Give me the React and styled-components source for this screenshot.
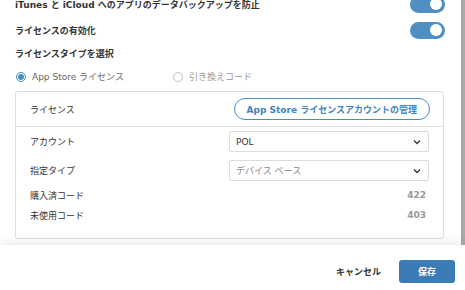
import React from "react";
import styled, { createGlobalStyle } from "styled-components";

const Global = createGlobalStyle`
  html, body { margin: 0; padding: 0; background: #fff; overflow: hidden; }
  body { font-family: "DejaVu Sans", "Noto Sans CJK JP", sans-serif; font-size: 9px; color: #333; }
  * { box-sizing: border-box; }
`;

const Frame = styled.div`
  width: 465px;
  height: 290px;
  display: flex;
  flex-direction: column;
  overflow: hidden;
`;

const ScrollArea = styled.div`
  height: 245px;
  display: flex;
  overflow: hidden;
`;

const Content = styled.div`
  flex: 1;
  margin-top: -9px;
  padding: 0 16px 0 15px;
  display: flex;
  flex-direction: column;
`;

const Scrollbar = styled.div`
  width: 4px;
  background: #a9a9a9;
`;

const ToggleRow = styled.div`
  height: 26px;
  flex: none;
  display: flex;
  align-items: center;
  justify-content: space-between;
`;

const Label = styled.span`
  font-weight: bold;
  color: #333;
  white-space: nowrap;
`;

const Toggle = styled.span`
  width: 35px;
  height: 17px;
  border-radius: 9px;
  background: #4f8fc4;
  display: flex;
  align-items: center;
  justify-content: flex-end;
  padding-right: 3px;
  &::after {
    content: "";
    width: 12px;
    height: 12px;
    border-radius: 50%;
    background: #fff;
  }
`;

const SectionTitle = styled.div`
  height: 21px;
  flex: none;
  display: flex;
  align-items: center;
  font-weight: bold;
`;

const RadioRow = styled.div`
  height: 25px;
  flex: none;
  display: flex;
  align-items: center;
  padding-left: 1px;
`;

const RadioItem = styled.label`
  display: flex;
  align-items: center;
  gap: 6px;
  width: ${(p) => p.$w}px;
  color: ${(p) => (p.$checked ? "#666" : "#999")};
`;

const RadioDot = styled.span`
  width: 10px;
  height: 10px;
  border-radius: 50%;
  border: 1px solid ${(p) => (p.$checked ? "#4a8ec2" : "#c4c4c4")};
  display: flex;
  align-items: center;
  justify-content: center;
  &::after {
    content: "";
    width: 6px;
    height: 6px;
    border-radius: 50%;
    background: ${(p) => (p.$checked ? "#4a8ec2" : "transparent")};
  }
`;

const Card = styled.div`
  margin-top: 2px;
  margin-right: 1px;
  flex: none;
  border: 1px solid #dedede;
  border-radius: 3px;
  display: flex;
  flex-direction: column;
`;

const CardHeader = styled.div`
  height: 35px;
  display: flex;
  align-items: center;
  justify-content: space-between;
  padding: 0 13px 0 14px;
  border-bottom: 1px solid #e3e3e3;
`;

const HeaderTitle = styled.span`
  color: #333;
`;

const PillButton = styled.button`
  height: 22px;
  padding: 0 12px;
  border: 1px solid #4a8ec2;
  border-radius: 11px;
  background: #fff;
  color: #3f84bf;
  font-family: inherit;
  font-size: 9px;
  font-weight: bold;
  white-space: nowrap;
`;

const CardBody = styled.div`
  padding: 0 14px 13px 14px;
  display: grid;
  grid-template-columns: 199px 1fr;
  grid-template-rows: 29px 29px auto;
  align-items: center;
`;

const CodeRows = styled.div`
  grid-column: 1 / -1;
  display: flex;
  flex-direction: column;
`;

const CodeRow = styled.div`
  height: 20px;
  display: flex;
  align-items: center;
  justify-content: space-between;
  padding-right: 3px;
`;

const FieldLabel = styled.span`
  color: #333;
`;

const CodeValue = styled.span`
  color: #999;
  font-weight: bold;
`;

const Select = styled.div`
  height: 21px;
  border: 1px solid #dcdcdc;
  border-radius: 2px;
  display: flex;
  align-items: center;
  justify-content: space-between;
  padding: 0 7px 0 6px;
  color: ${(p) => (p.$muted ? "#888" : "#333")};
`;

const Footer = styled.div`
  flex: 1;
  display: flex;
  align-items: center;
  justify-content: flex-end;
  gap: 16px;
  padding: 7px 10px 0 0;
  background: #fff;
  position: relative;
  box-shadow: 0 -5px 8px rgba(0, 0, 0, 0.06);
`;

const CancelButton = styled.button`
  border: none;
  background: none;
  padding: 0 2px;
  font-family: inherit;
  font-size: 9px;
  font-weight: bold;
  color: #333;
`;

const SaveButton = styled.button`
  width: 56px;
  height: 23px;
  border: none;
  border-radius: 3px;
  background: #3b7cb7;
  color: #fff;
  font-family: inherit;
  font-size: 9px;
  font-weight: bold;
`;

const Chevron = () => (
  <svg width="8" height="6" viewBox="0 0 8 6">
    <path d="M1 1.5 L4 4.5 L7 1.5" fill="none" stroke="#333" strokeWidth="1.3" />
  </svg>
);

export default function App() {
  return (
    <Frame>
      <Global />
      <ScrollArea>
        <Content>
          <ToggleRow>
            <Label>iTunes と iCloud へのアプリのデータバックアップを防止</Label>
            <Toggle />
          </ToggleRow>
          <ToggleRow>
            <Label>ライセンスの有効化</Label>
            <Toggle />
          </ToggleRow>
          <SectionTitle>ライセンスタイプを選択</SectionTitle>
          <RadioRow>
            <RadioItem $w={157} $checked>
              <RadioDot $checked />
              App Store ライセンス
            </RadioItem>
            <RadioItem $w={120}>
              <RadioDot />
              引き換えコード
            </RadioItem>
          </RadioRow>
          <Card>
            <CardHeader>
              <HeaderTitle>ライセンス</HeaderTitle>
              <PillButton>App Store ライセンスアカウントの管理</PillButton>
            </CardHeader>
            <CardBody>
              <FieldLabel>アカウント</FieldLabel>
              <Select>
                POL
                <Chevron />
              </Select>
              <FieldLabel>指定タイプ</FieldLabel>
              <Select $muted>
                デバイス ベース
                <Chevron />
              </Select>
              <CodeRows>
                <CodeRow>
                  <FieldLabel>購入済コード</FieldLabel>
                  <CodeValue>422</CodeValue>
                </CodeRow>
                <CodeRow>
                  <FieldLabel>未使用コード</FieldLabel>
                  <CodeValue>403</CodeValue>
                </CodeRow>
              </CodeRows>
            </CardBody>
          </Card>
        </Content>
        <Scrollbar />
      </ScrollArea>
      <Footer>
        <CancelButton>キャンセル</CancelButton>
        <SaveButton>保存</SaveButton>
      </Footer>
    </Frame>
  );
}
